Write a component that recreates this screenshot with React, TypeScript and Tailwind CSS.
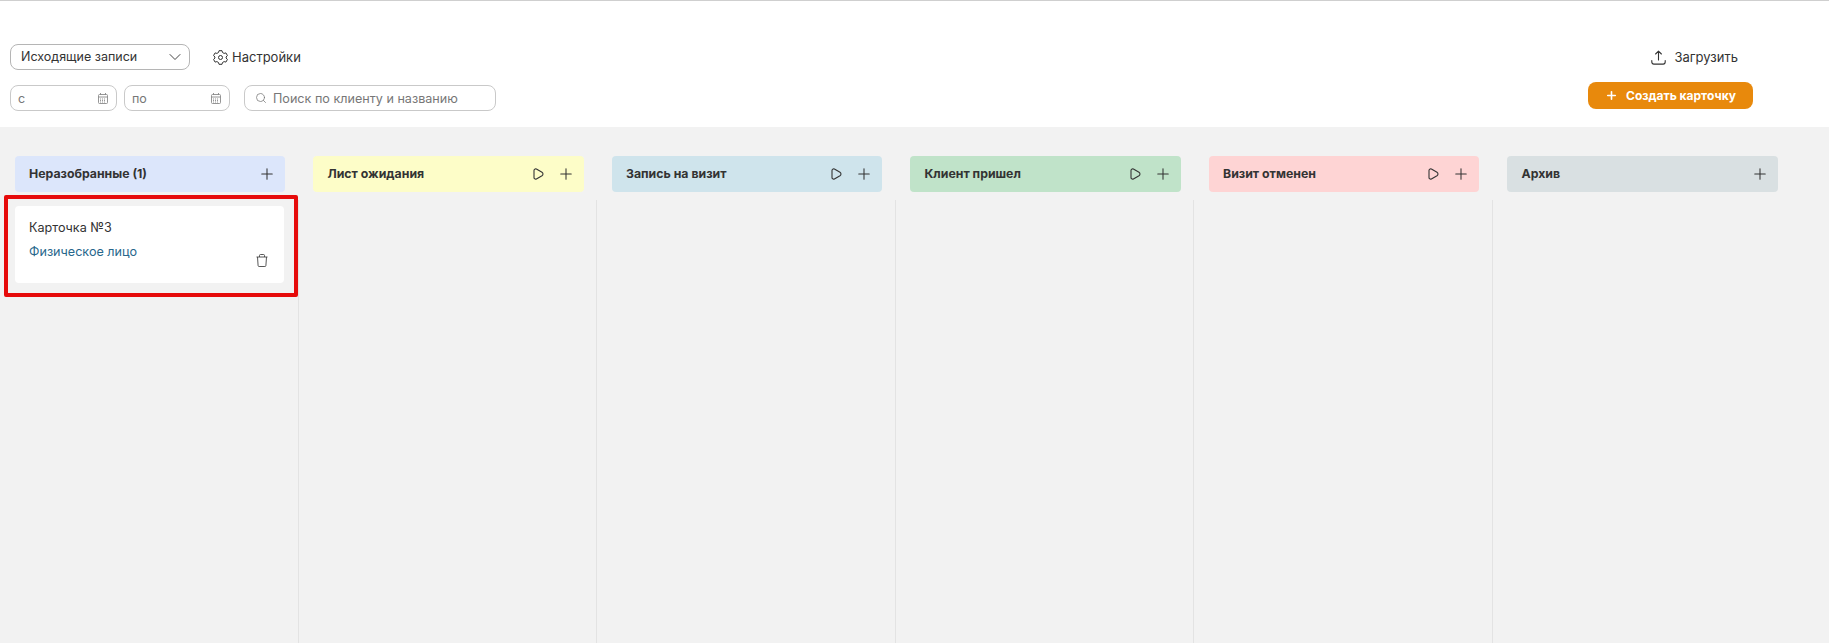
import React from 'react';
import { ChevronDown, Search, Plus } from 'lucide-react';

const columns = [
  { title: 'Неразобранные (1)', color: 'bg-[#dce6fb]', play: false },
  { title: 'Лист ожидания', color: 'bg-[#fdfdc8]', play: true },
  { title: 'Запись на визит', color: 'bg-[#cfe4ec]', play: true },
  { title: 'Клиент пришел', color: 'bg-[#c0e3c9]', play: true },
  { title: 'Визит отменен', color: 'bg-[#fed4d4]', play: true },
  { title: 'Архив', color: 'bg-[#d9e0e2]', play: false },
];

const GearIcon = () => (
  <svg width="15" height="15" viewBox="0 0 15 15" fill="none" stroke="currentColor" strokeWidth="1" strokeLinejoin="round">
    <path d="M6 1.2h3l.5 1.8 1.6.9 1.8-.5 1.5 2.6-1.3 1.5v1l1.3 1.5-1.5 2.6-1.8-.5-1.6.9-.5 1.8H6l-.5-1.8-1.6-.9-1.8.5L.6 10l1.3-1.5v-1L.6 6l1.5-2.6 1.8.5 1.6-.9z" transform="translate(0 -.5)" />
    <circle cx="7.5" cy="7.5" r="2" />
  </svg>
);

const CalendarIcon = () => (
  <svg width="10" height="11" viewBox="0 0 10 11" fill="none" stroke="#8a8a8a" strokeWidth="0.9">
    <rect x="0.5" y="1.5" width="9" height="9" rx="1" />
    <path d="M0.5 4h9M2.5 0v2M7.5 0v2" />
    <path d="M2 6h6M2 7.5h6M2 9h6" strokeDasharray="1 1" />
  </svg>
);

const PlayIcon = () => (
  <svg width="11" height="12" viewBox="0 0 11 12" fill="none" stroke="currentColor" strokeWidth="1.1" strokeLinejoin="round">
    <path d="M1 2.6C1 1.2 2.2.6 3.4 1.1l5.6 3.1c1.3.8 1.3 2.8 0 3.6l-5.6 3.1C2.2 11.4 1 10.8 1 9.4z" />
  </svg>
);

const TrashIcon = () => (
  <svg width="12" height="13" viewBox="0 0 12 13" fill="none" stroke="#444" strokeWidth="0.9" strokeLinejoin="round">
    <path d="M0.5 3h11M3.5 3V1.5a1 1 0 0 1 1-1h3a1 1 0 0 1 1 1V3" />
    <path d="M1.5 3l.6 8.6a1 1 0 0 0 1 .9h5.8a1 1 0 0 0 1-.9l.6-8.6" />
  </svg>
);

const UploadIcon = () => (
  <svg width="15" height="15" viewBox="0 0 15 15" fill="none" stroke="currentColor" strokeWidth="1.1" strokeLinecap="round" strokeLinejoin="round">
    <path d="M7.5 10V1.2M4.6 4l2.9-2.9L10.4 4" />
    <path d="M.8 10.5v1.6a2 2 0 0 0 2 2h9.4a2 2 0 0 0 2-2v-1.6" />
  </svg>
);

const DateField = ({ label, width }: { label: string; width: string }) => (
  <div className={`flex h-[26px] ${width} items-center justify-between rounded-lg border border-[#c9c9c9] pl-[7px] pr-[8px] text-[12.5px] text-[#777]`}>
    <span className="pt-[2px]">{label}</span>
    <CalendarIcon />
  </div>
);

export default function App() {
  return (
    <div className="flex h-[643px] w-[1829px] flex-col overflow-hidden bg-[#f2f2f2] font-['Inter',sans-serif] text-[#333]">
      {/* Toolbar */}
      <header className="flex h-[127px] shrink-0 justify-between border-t border-[#cfcfcf] bg-white pl-2.5 pr-[76px] pt-[43px]">
        <div className="flex flex-col gap-[15px]">
          <div className="flex items-center">
            <div className="flex h-[26px] w-[180px] items-center justify-between rounded-lg border border-[#b5b5b5] pl-[10px] pr-[4px] text-[12.5px]">
              <span className="pt-px">Исходящие записи</span>
              <ChevronDown size={20} strokeWidth={1.1} />
            </div>
            <div className="ml-[23px] flex items-center gap-[4px] text-[13px]">
              <GearIcon />
              <span className="pt-px">Настройки</span>
            </div>
          </div>
          <div className="flex items-center">
            <DateField label="с" width="w-[107px]" />
            <div className="ml-[7px]">
              <DateField label="по" width="w-[106px]" />
            </div>
            <div className="ml-[14px] flex h-[26px] w-[252px] items-center gap-[6px] rounded-lg border border-[#c9c9c9] pl-2.5 text-[12.6px] text-[#777]">
              <Search size={12} strokeWidth={1.5} />
              <span className="pt-[2px]">Поиск по клиенту и названию</span>
            </div>
          </div>
        </div>
        <div className="flex flex-col items-end gap-[12px]">
          <div className="mr-[15px] flex h-[26px] items-center gap-2 text-[13px]">
            <UploadIcon />
            <span className="pt-px">Загрузить</span>
          </div>
          <div className="flex h-[27px] w-[165px] items-center justify-center gap-[8px] rounded-lg bg-[#e8890c] text-[12px] font-bold text-white">
            <Plus size={13} strokeWidth={3} />
            <span>Создать карточку</span>
          </div>
        </div>
      </header>

      {/* Board */}
      <main className="flex min-h-0 flex-1 pr-[38px]">
        {columns.map((col, i) => (
          <section key={col.title} className="relative flex w-[298.67px] flex-col">
            <div className="pl-[14.5px] pr-[13.5px] pt-[29px]">
              <div className={`flex h-9 items-center justify-between rounded pl-[14.5px] pr-[9px] text-[12.3px] font-bold ${col.color}`}>
                <span>{col.title}</span>
                <div className="flex items-center gap-[13px]">
                  {col.play && <PlayIcon />}
                  <Plus size={18} strokeWidth={1.4} />
                </div>
              </div>
            </div>
            <div className={`mt-2 flex-1 pl-[15px] pr-[14px] ${i < 5 ? 'border-r border-[#e3e3e3]' : ''}`}>
              {i === 0 && (
                <div className="relative mt-[6px]">
                  <div className="h-[77px] rounded bg-white pl-[14px] pt-[14px] text-[12.6px] leading-4">
                    <div>Карточка №3</div>
                    <div className="mt-2 text-[#27678c]">Физическое лицо</div>
                    <div className="absolute bottom-[16px] right-[16px]">
                      <TrashIcon />
                    </div>
                  </div>
                  {/* Red annotation frame */}
                  <div className="absolute -left-[11px] -right-[14px] -top-[11px] -bottom-[14px] rounded-[2px] border-4 border-[#e60b0b]" />
                </div>
              )}
            </div>
          </section>
        ))}
      </main>
    </div>
  );
}
